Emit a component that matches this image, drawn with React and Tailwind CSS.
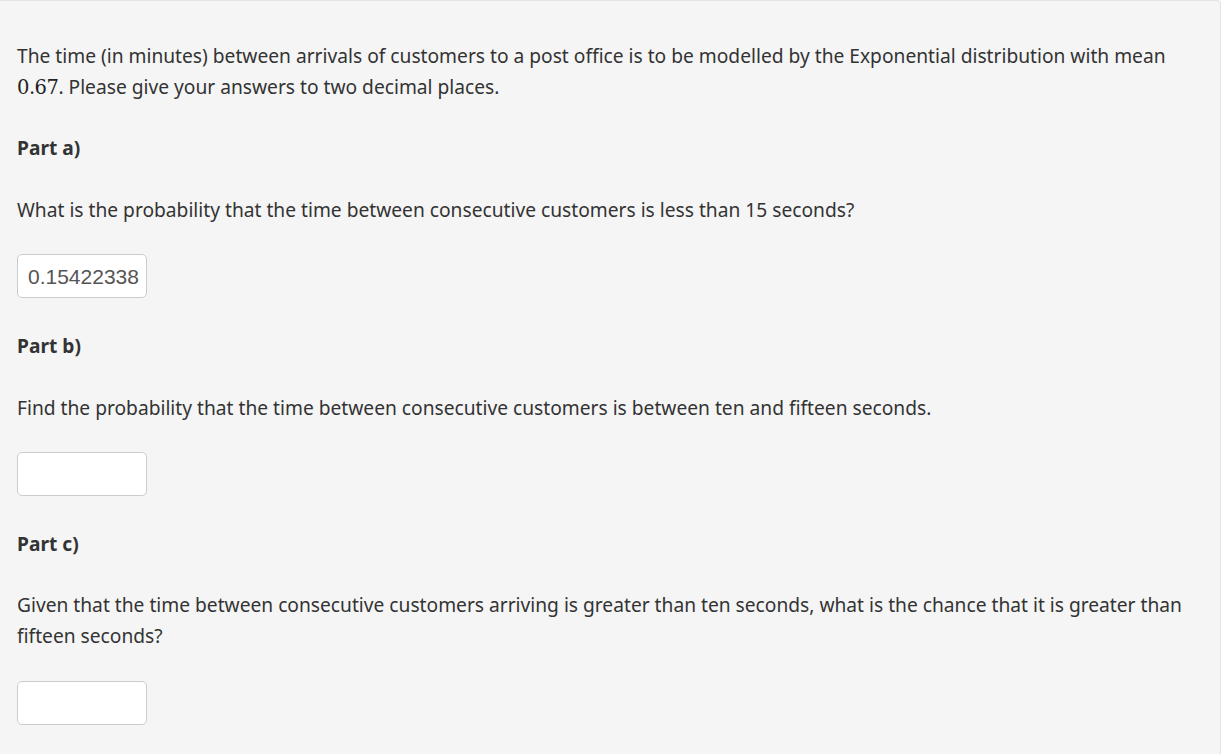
export default function App() {
  const Input = ({ value }) => (
    <div className="w-[130px] h-[44px] rounded-[5px] border border-[#cccccc] bg-white flex items-center pl-[10px] text-[21px] text-[#555555] font-['Liberation_Sans',Arial,sans-serif]">
      {value}
    </div>
  );
  return (
    <div className="w-[1228px] h-[754px] bg-white overflow-hidden">
      <div className="w-[1221px] h-[760px] bg-[#f5f5f5] border-t border-r border-[#e3e3e3] rounded-tr-[4px] pl-[17px] pr-[30px] pt-[39px] text-[19.2px] leading-[31px] text-[#333333] font-['Noto_Sans','Open_Sans',sans-serif]">
        <p>
          The time (in minutes) between arrivals of customers to a post office is to be modelled by the Exponential distribution with mean{' '}
          <span className="text-[19.5px] leading-[20px] tracking-[-0.5px] text-[#222222]" style={{ fontFamily: '"DejaVu Serif", serif' }}>0.67</span>. Please give your answers to two decimal places.
        </p>
        <p className="mt-[30px] font-bold">Part a)</p>
        <p className="mt-[31px]">What is the probability that the time between consecutive customers is less than 15 seconds?</p>
        <div className="mt-[29px]"><Input value="0.15422338" /></div>
        <p className="mt-[32px] font-bold">Part b)</p>
        <p className="mt-[31px]">Find the probability that the time between consecutive customers is between ten and fifteen seconds.</p>
        <div className="mt-[29px]"><Input value="" /></div>
        <p className="mt-[32px] font-bold">Part c)</p>
        <p className="mt-[30px]">Given that the time between consecutive customers arriving is greater than ten seconds, what is the chance that it is greater than fifteen seconds?</p>
        <div className="mt-[30px]"><Input value="" /></div>
      </div>
    </div>
  );
}
